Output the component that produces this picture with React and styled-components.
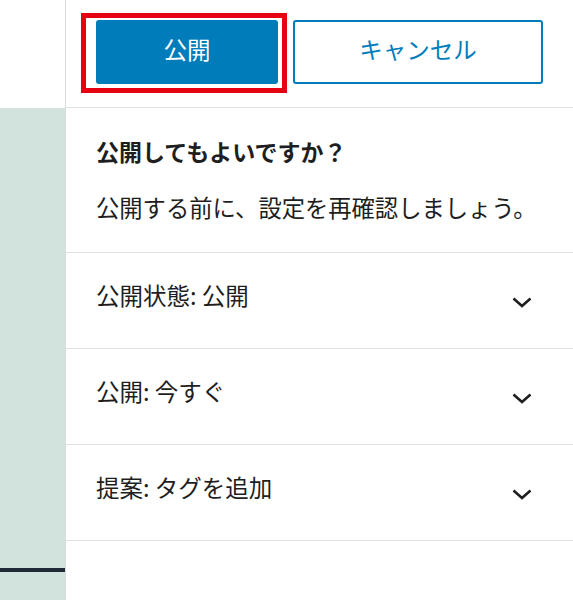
import React from 'react';
import styled, { createGlobalStyle } from 'styled-components';

const GlobalStyle = createGlobalStyle`
  html, body {
    margin: 0;
    padding: 0;
    background: #fff;
  }
  body {
    font-family: "Noto Sans CJK JP", "Noto Sans", sans-serif;
    color: #1e1e1e;
  }
`;

const Page = styled.div`
  display: flex;
  width: 573px;
  height: 600px;
  overflow: hidden;
`;

const EditorStrip = styled.div`
  width: 65px;
  flex-shrink: 0;
  display: flex;
  flex-direction: column;
`;

const StripTop = styled.div`
  height: 108px;
  background: #fff;
`;

const StripCanvas = styled.div`
  flex: 1;
  background: #d2e3de;
  display: flex;
  flex-direction: column;
  justify-content: flex-end;
  padding-bottom: 28px;
`;

const DarkBar = styled.div`
  height: 4px;
  background: #1f2a36;
`;

const Panel = styled.div`
  flex: 1;
  border-left: 1px solid #dcdcdc;
  display: flex;
  flex-direction: column;
  background: #fff;
`;

const Header = styled.div`
  display: flex;
  gap: 15px;
  padding: 20px 29px 23px 30px;
  border-bottom: 1px solid #e0e0e0;
`;

const Highlight = styled.div`
  position: relative;
  width: 182px;

  &::after {
    content: '';
    position: absolute;
    top: -7px;
    left: -15px;
    right: -9px;
    bottom: -9px;
    border: 5px solid #e60012;
    pointer-events: none;
  }
`;

const Button = styled.button`
  box-sizing: border-box;
  height: 64px;
  width: ${props => props.width || '100%'};
  padding: 0 0 7px;
  border-radius: 3px;
  font-family: inherit;
  font-size: 23.5px;
  cursor: pointer;
  background: ${props => (props.primary ? '#007cba' : '#fff')};
  color: ${props => (props.primary ? '#fff' : '#007cba')};
  border: ${props => (props.primary ? 'none' : '2px solid #007cba')};
`;

const Intro = styled.div`
  padding: 28px 30px 30px;
  border-bottom: 1px solid #e0e0e0;
`;

const Title = styled.h2`
  margin: 0 0 26px;
  font-size: 23px;
  line-height: 30px;
  font-weight: 700;
`;

const Text = styled.p`
  margin: 0;
  font-size: 23.3px;
  line-height: 30px;
  white-space: nowrap;
`;

const Row = styled.div`
  height: 95px;
  display: flex;
  align-items: center;
  justify-content: space-between;
  padding: 0 41px 0 30px;
  border-bottom: 1px solid #e0e0e0;
  font-size: 23.5px;
  cursor: pointer;
`;

const Label = styled.span`
  margin-bottom: 11px;
`;

const Chevron = () => (
  <svg width="20" height="11" viewBox="0 0 20 11" style={{ marginTop: 4 }}>
    <polyline
      points="1.5,1.5 10,9 18.5,1.5"
      fill="none"
      stroke="#1e1e1e"
      strokeWidth="2.6"
    />
  </svg>
);

const rows = ['公開状態: 公開', '公開: 今すぐ', '提案: タグを追加'];

const App = () => (
  <>
    <GlobalStyle />
    <Page>
      <EditorStrip>
        <StripTop />
        <StripCanvas>
          <DarkBar />
        </StripCanvas>
      </EditorStrip>
      <Panel>
        <Header>
          <Highlight>
            <Button primary>公開</Button>
          </Highlight>
          <Button width="250px">キャンセル</Button>
        </Header>
        <Intro>
          <Title>公開してもよいですか？</Title>
          <Text>公開する前に、設定を再確認しましょう。</Text>
        </Intro>
        {rows.map(label => (
          <Row key={label}>
            <Label>{label}</Label>
            <Chevron />
          </Row>
        ))}
      </Panel>
    </Page>
  </>
);

export default App;
